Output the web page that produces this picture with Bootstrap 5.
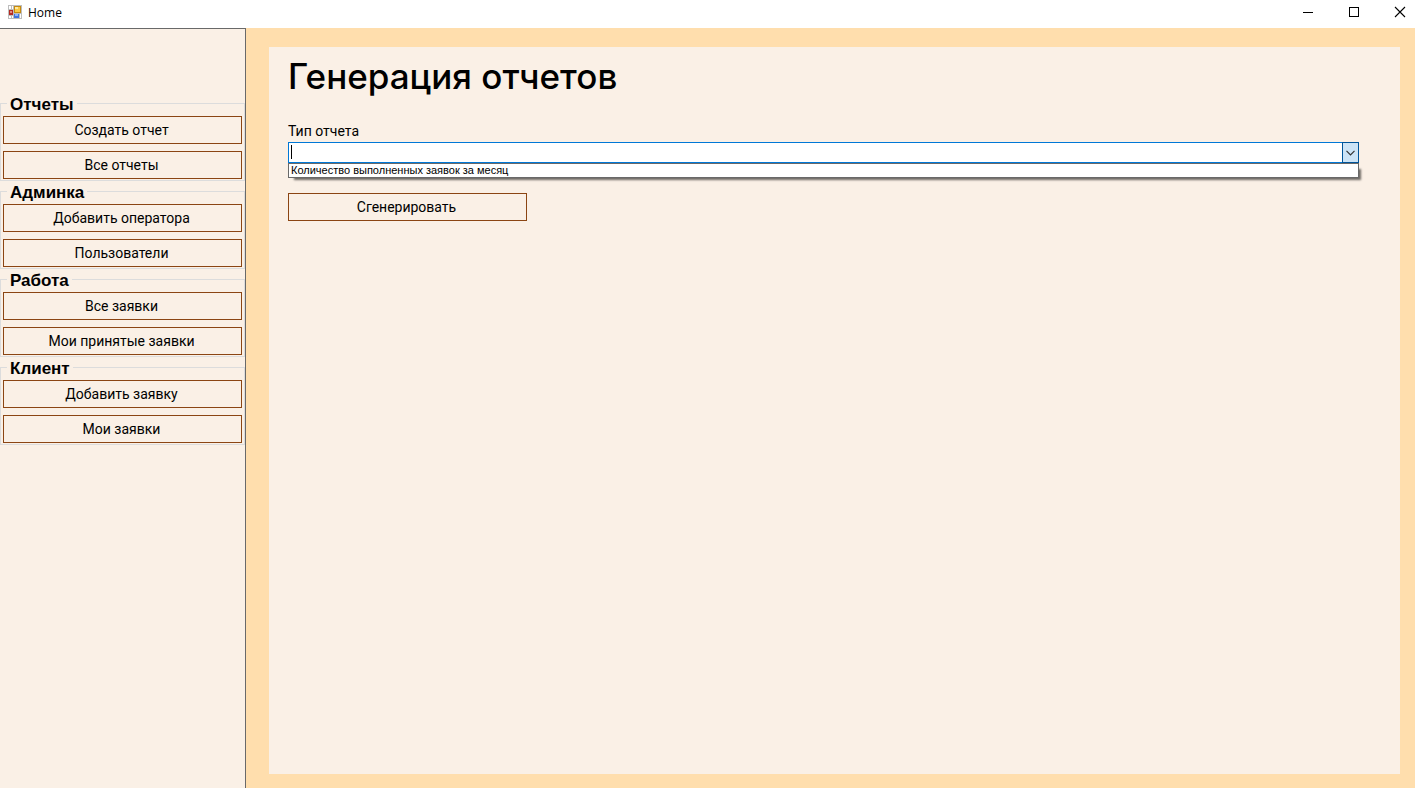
<!DOCTYPE html>
<html lang="ru">
<head>
<meta charset="utf-8">
<meta name="viewport" content="width=device-width, initial-scale=1">
<title>Home</title>
<link href="https://cdn.jsdelivr.net/npm/bootstrap@5.3.0/dist/css/bootstrap.min.css" rel="stylesheet">
<style>
  body { font-family: Roboto, "Liberation Sans", sans-serif; font-size: 14px; line-height: 20px; color: #000; background: #faf0e6; }
  .titlebar { height: 28px; font-family: "Open Sans", "Noto Sans", sans-serif; font-size: 12px; padding-left: 8px; gap: 6px; }
  .app-name { line-height: 26px; }
  .win-btn { width: 46px; height: 24px; border: 0; background: none; padding: 0; }
  .win-btn svg, .app-icon { display: block; }
  .win-btn svg { margin: auto; }
  .win-btns { margin-right: -8px; }
  .sidebar { width: 246px; border-top: 1px solid #696969; border-right: 1px solid #696969; padding-top: 65px; }
  .group-box { border: 1px solid #dcdcdc; padding: 4px 2px 1px; margin-bottom: 1px; min-width: 0; }
  .group-box legend { float: none; width: auto; font-family: "Liberation Sans", sans-serif; font-size: 17px; line-height: 22px; height: 18px; font-weight: 700; margin: 0 0 0 4px; padding: 0 3px; }
  .stack { gap: 7px; }
  .btn-flat { --bs-btn-color: #000; --bs-btn-border-color: #8b4513; --bs-btn-hover-bg: #ffdead; --bs-btn-hover-border-color: #8b4513; --bs-btn-border-radius: 0; --bs-btn-font-size: 14px; --bs-btn-line-height: 26px; height: 28px; padding: 0 6px 0 4px; }
  .workspace { background: #ffdead; padding: 19px 15px 14px 23px; }
  .page-panel { background: #faf0e6; padding: 8px 41px 20px 19px; }
  .page-panel h1 { font-family: Inter, sans-serif; font-size: 35px; line-height: 42px; font-weight: 500; margin: 0 0 24px; }
  .field-label { line-height: 21px; margin: 0; display: block; }
  .combo { height: 21px; background: #fff; border: 1px solid #0078d7; }
  .combo input { border: 0; outline: 0; background: none; padding: 0 3px; min-width: 0; height: 19px; }
  .combo button { width: 17px; margin: -1px; border: 1px solid #005499; background: #cce4f7; padding: 0; }
  .combo button svg { display: block; margin: auto; }
  .text-caret { left: 2px; top: 2px; width: 1px; height: 14px; background: #000; }
  .options { border: 1px solid #696969; background: #fff; font-family: "Liberation Sans", sans-serif; font-size: 11px; line-height: 13px; box-shadow: 4px 4px 2px -2px #00000090; margin-bottom: 15px; padding-left: 2px; }
  .generate { width: 239px; }
</style>
</head>
<body class="d-flex flex-column min-vh-100">
<header class="titlebar bg-white d-flex align-items-start">
  <svg class="app-icon mt-1" width="14" height="16" viewBox="0 0 14 16" shape-rendering="crispEdges" aria-hidden="true">
    <path d="M0 1h14v14H0z" fill="#bdbdbd"/>
    <path d="M1 2h2v3H1zM4 2h1v3H4zM1 12h2v2H1zM4 12h1v2H4zM12 10h1v4h-1z" fill="#fff"/>
    <path d="M1 6h4v5H1z" fill="#b52a22"/><path d="M2 7h2v2H2z" fill="#e58a7c"/>
    <path d="M6 2h7v7H6z" fill="#c58a10"/><path d="M7 3h5v5H7z" fill="#f9c846"/><path d="M7 3h3v2H7z" fill="#ffe9a0"/>
    <path d="M6 10h5v4H6z" fill="#3f74dc"/><path d="M7 10h3v2H7z" fill="#8db4fa"/>
  </svg>
  <span class="app-name me-auto">Home</span>
  <div class="win-btns d-flex">
    <button class="win-btn" type="button" aria-label="Свернуть"><svg width="12" height="12" viewBox="0 0 12 12" shape-rendering="crispEdges"><path d="M1 6h10v1H1z"/></svg></button>
    <button class="win-btn" type="button" aria-label="Развернуть"><svg width="12" height="12" viewBox="0 0 12 12" shape-rendering="crispEdges"><path d="M1.500 1.500h9v9h-9z" fill="none" stroke="#000"/></svg></button>
    <button class="win-btn" type="button" aria-label="Закрыть"><svg width="12" height="12" viewBox="0 0 12 12"><path d="M1 1l10 10M11 1L1 11" fill="none" stroke="#000" stroke-width="1.100"/></svg></button>
  </div>
</header>
<div class="d-flex flex-grow-1">
  <nav class="sidebar flex-shrink-0" aria-label="Меню">
    <fieldset class="group-box"><legend>Отчеты</legend><div class="stack d-grid">
      <button class="btn btn-flat" type="button">Создать отчет</button>
      <button class="btn btn-flat" type="button">Все отчеты</button></div></fieldset>
    <fieldset class="group-box"><legend>Админка</legend><div class="stack d-grid">
      <button class="btn btn-flat" type="button">Добавить оператора</button>
      <button class="btn btn-flat" type="button">Пользователи</button></div></fieldset>
    <fieldset class="group-box"><legend>Работа</legend><div class="stack d-grid">
      <button class="btn btn-flat" type="button">Все заявки</button>
      <button class="btn btn-flat" type="button">Мои принятые заявки</button></div></fieldset>
    <fieldset class="group-box"><legend>Клиент</legend><div class="stack d-grid">
      <button class="btn btn-flat" type="button">Добавить заявку</button>
      <button class="btn btn-flat" type="button">Мои заявки</button></div></fieldset>
  </nav>
  <main class="workspace flex-grow-1 d-flex">
    <form class="page-panel flex-grow-1">
      <h1>Генерация отчетов</h1>
      <label class="field-label" for="report-type">Тип отчета</label>
      <div class="combo d-flex position-relative">
        <input class="flex-grow-1" id="report-type" type="text" role="combobox" aria-expanded="true" aria-controls="report-options" autocomplete="off">
        <span class="text-caret position-absolute"></span>
        <button type="button" aria-label="Показать список"><svg width="9" height="6" viewBox="0 0 9 6"><path d="M.5.8l4 4 4-4" fill="none" stroke="#333" stroke-width="1.200"/></svg></button>
      </div>
      <ul class="options list-unstyled" id="report-options" role="listbox">
        <li role="option" aria-selected="false">Количество выполненных заявок за месяц</li>
      </ul>
      <button class="btn btn-flat generate" type="button">Сгенерировать</button>
    </form>
  </main>
</div>
<script src="https://cdn.jsdelivr.net/npm/bootstrap@5.3.0/dist/js/bootstrap.bundle.min.js"></script>
</body>
</html>
